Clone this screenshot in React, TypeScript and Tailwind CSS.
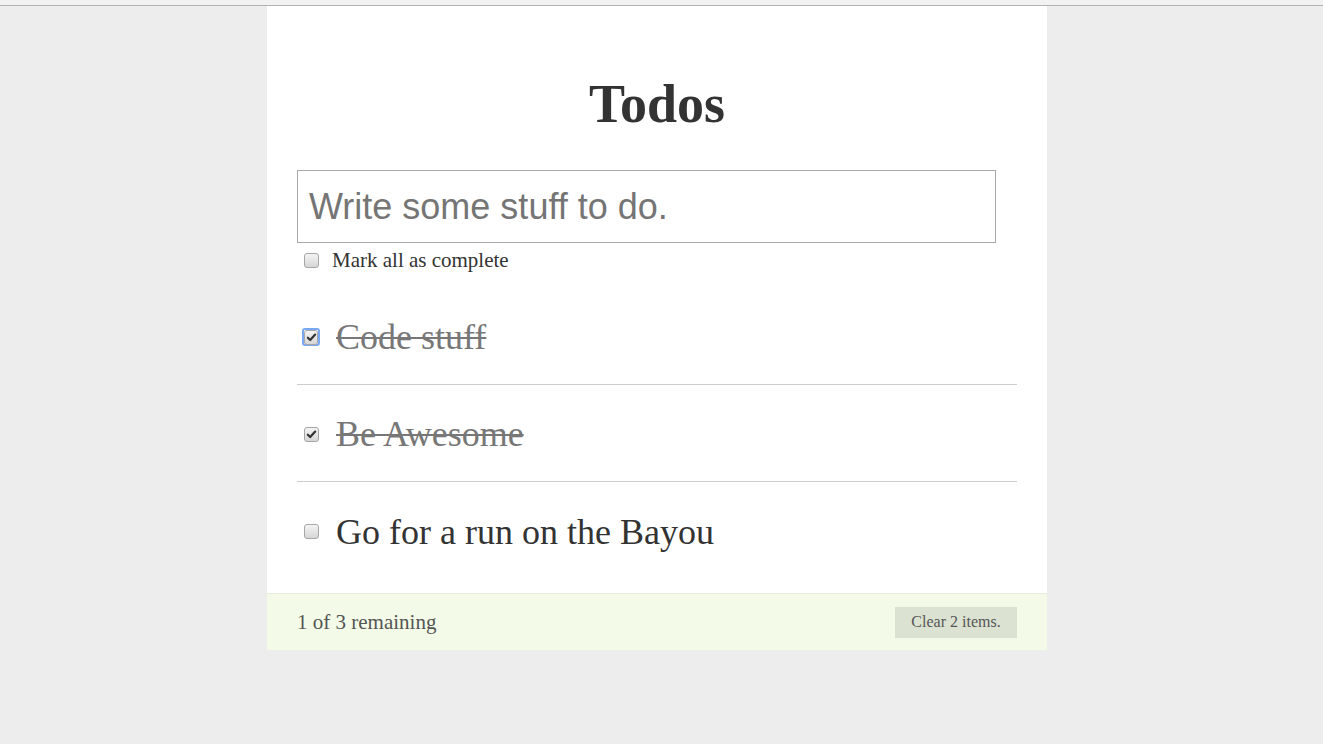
import { useState } from 'react'

interface Todo {
  id: number
  text: string
  done: boolean
}

function Box({ checked, focused, onClick }: { checked: boolean; focused?: boolean; onClick?: () => void }) {
  return (
    <span
      onClick={onClick}
      className={
        'relative flex h-[18px] w-[18px] shrink-0 items-center justify-center rounded-[3px] ' +
        (focused ? 'border-2 border-[#7aa8f0]' : 'border border-transparent')
      }
    >
      <span className="flex h-[15px] w-[15px] items-center justify-center rounded-[3px] border border-[#a6a6a6] bg-gradient-to-b from-[#f4f4f4] to-[#d6d6d6]">
        {checked && (
          <svg viewBox="0 0 12 12" className="h-[11px] w-[11px]">
            <path d="M2 6.2 L4.6 8.8 L10 2.8" fill="none" stroke="#333" strokeWidth="2.4" strokeLinecap="round" strokeLinejoin="round" />
          </svg>
        )}
      </span>
    </span>
  )
}

export default function App() {
  const [todos, setTodos] = useState<Todo[]>([
    { id: 1, text: 'Code stuff', done: true },
    { id: 2, text: 'Be Awesome', done: true },
    { id: 3, text: 'Go for a run on the Bayou', done: false },
  ])

  const remaining = todos.filter(t => !t.done).length
  const completed = todos.length - remaining

  const toggle = (id: number) =>
    setTodos(todos.map(t => (t.id === id ? { ...t, done: !t.done } : t)))

  return (
    <div className="min-h-[744px] bg-[#ededed] font-['Liberation_Serif',serif]">
      {/* browser strip */}
      <div className="h-[6px] border-b border-[#b3b3b3] bg-[#f2f2f2]" />

      <div className="ml-[267px] w-[780px]">
        <div className="bg-white px-[30px] pb-[14px]">
          <h1 className="pt-[72px] text-center text-[54px] leading-[52px] font-bold text-[#333]">Todos</h1>

          <div className="mt-[40px] flex h-[73px] w-[699px] items-center border border-[#a9a9a9] px-[11px] font-['Liberation_Sans',sans-serif] text-[36px] text-[#757575]">
            Write some stuff to do.
          </div>

          <div className="mt-[5px] flex items-center gap-[12px] pl-[5px] text-[21px] leading-[24px] text-[#333]">
            <Box checked={false} />
            <span>Mark all as complete</span>
          </div>

          <ul className="mt-[16px]">
            {todos.map((todo, i) => (
              <li
                key={todo.id}
                className={
                  'flex h-[97px] items-center gap-[16px] pl-[5px] pt-[2px] text-[36px] ' +
                  (i < todos.length - 1 ? 'border-b border-[#cccccc]' : '')
                }
              >
                <Box checked={todo.done} focused={i === 0} onClick={() => toggle(todo.id)} />
                <span className={todo.done ? 'text-[#777] line-through decoration-[2px]' : 'text-[#333]'}>
                  {todo.text}
                </span>
              </li>
            ))}
          </ul>
        </div>

        {/* footer */}
        <div className="flex h-[57px] items-center justify-between border-t border-[#e6ecdc] bg-[#f3fbe8] px-[30px]">
          <span className="pt-[1px] text-[21px] text-[#555]">
            {remaining} of {todos.length} remaining
          </span>
          <button className="h-[31px] w-[122px] bg-[#dbe2d2] text-[16px] text-[#555]">
            Clear {completed} items.
          </button>
        </div>
      </div>
    </div>
  )
}
